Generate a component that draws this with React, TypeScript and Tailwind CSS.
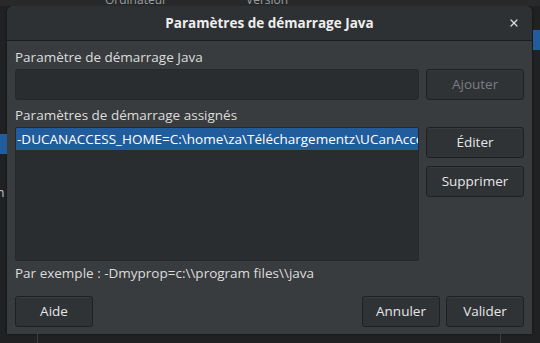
import { X } from 'lucide-react'

const font = { fontFamily: '"Open Sans", "Noto Sans", "DejaVu Sans", sans-serif' }

function Btn({ label, disabled, className = '' }: { label: string; disabled?: boolean; className?: string }) {
  return (
    <button
      className={`h-[31px] rounded-[3px] border border-[#1e2022] bg-[#303336] text-[13.5px] shadow-[inset_0_1px_0_rgba(255,255,255,0.04)] ${
        disabled ? 'text-[#7a7d80]' : 'text-[#e6e6e6]'
      } ${className}`}
    >
      {label}
    </button>
  )
}

export default function App() {
  return (
    <div className="relative h-[343px] w-[540px] overflow-hidden bg-[#1f2123]" style={font}>
      {/* background app bits */}
      <div className="absolute left-0 top-0 h-[6px] w-[540px] bg-[#27292b]" />
      <div className="absolute left-[105px] top-[-6px] text-[12px] leading-[12px] text-[#9a9c9e]">Ordinateur</div>
      <div className="absolute left-[246px] top-[-6px] text-[12px] leading-[12px] text-[#9a9c9e]">Version</div>
      <div className="absolute left-0 top-[134px] h-[20px] w-[7px] bg-[#215d9c]" />
      <div className="absolute left-[-3px] top-[184px] text-[12px] text-[#cfcfcf]">n</div>
      <div className="absolute left-[533px] top-[30px] h-[20px] w-[7px] bg-[#215d9c]" />
      <div className="absolute left-[37px] top-[334px] h-[9px] w-px bg-[#3a3c3e]" />
      <div className="absolute left-[500px] top-[334px] h-[9px] w-px bg-[#3a3c3e]" />

      <div className="pl-[7px] pt-[6px]">
        <div className="flex h-[328px] w-[525px] flex-col overflow-hidden rounded-t-[6px] bg-[#393c3f] shadow-[0_0_3px_rgba(0,0,0,0.6)]">
          <div className="relative flex h-[35px] shrink-0 items-center justify-center border-b border-[#1b1d1e] bg-[#2e3134]">
            <span className="text-[13.5px] font-bold text-[#eeeeee]">Paramètres de démarrage Java</span>
            <X className="absolute right-[12px] top-[11px] h-[12px] w-[12px] text-[#dddddd]" strokeWidth={2.5} />
          </div>

          <div className="flex flex-1 flex-col px-[8px]">
            <div className="mt-[7px] text-[13.5px] leading-[18px] text-[#dcdcdc]">Paramètre de démarrage Java</div>
            <div className="mt-[3px] flex gap-[7px]">
              <div className="h-[31px] w-[405px] rounded-[3px] border border-[#262829] bg-[#2a2d2f]" />
              <Btn label="Ajouter" disabled className="w-[98px]" />
            </div>
            <div className="mt-[6px] text-[13.5px] leading-[18px] text-[#dcdcdc]">Paramètres de démarrage assignés</div>
            <div className="mt-[3px] flex gap-[7px]">
              <div className="h-[134px] w-[405px] overflow-hidden rounded-[2px] border border-[#26282a] bg-[#2a2d2f]">
                <div className="flex h-[22px] items-center overflow-hidden whitespace-nowrap bg-[#215d9c] pl-[1px] text-[13.5px] text-white">
                  -DUCANACCESS_HOME=C:\home\za\Téléchargementz\UCanAccess
                </div>
              </div>
              <div className="flex flex-col gap-[8px]">
                <Btn label="Éditer" className="w-[98px]" />
                <Btn label="Supprimer" className="w-[98px]" />
              </div>
            </div>
            <div className="mt-[3px] text-[13.5px] leading-[18px] text-[#dcdcdc]">Par exemple : -Dmyprop=c:\\program files\\java</div>
            <div className="mt-auto mb-[7px] flex items-center">
              <Btn label="Aide" className="w-[78px]" />
              <div className="flex-1" />
              <Btn label="Annuler" className="w-[78px]" />
              <Btn label="Valider" className="ml-[6px] w-[78px]" />
            </div>
          </div>
        </div>
      </div>
    </div>
  )
}
